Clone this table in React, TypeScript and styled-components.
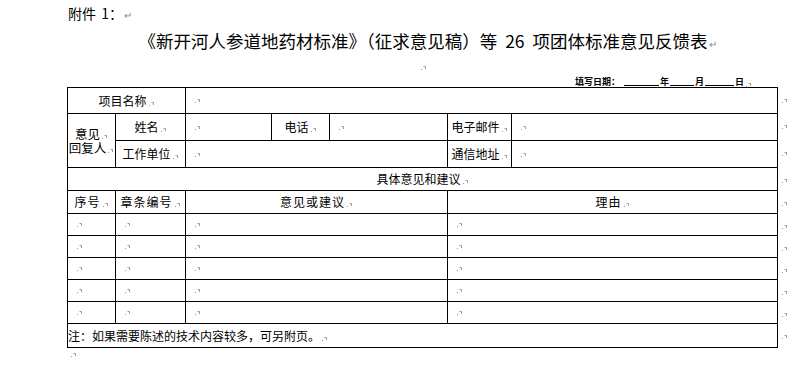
import styled, { createGlobalStyle } from 'styled-components';

const GlobalStyle = createGlobalStyle`
  html, body {
    margin: 0;
    padding: 0;
    background: #fff;
  }
  body {
    font-family: 'Noto Sans CJK SC', 'Liberation Sans', sans-serif;
    color: #000;
  }
`;

const Page = styled.div`
  width: 811px;
  height: 382px;
  padding-left: 67px;
  box-sizing: border-box;
  overflow: hidden;
`;

const Column = styled.div`
  width: 720px;
`;

const Attachment = styled.div`
  height: 26px;
  line-height: 26px;
  font-size: 14px;
  padding-left: 1px;
  word-spacing: 2px;
`;

const Title = styled.div`
  width: 711px;
  height: 30px;
  line-height: 30px;
  font-size: 17.5px;
  text-align: center;
  padding-left: 10px;
  box-sizing: border-box;
  white-space: nowrap;
  word-spacing: 4px;
`;

const Return = styled.span`
  color: #8a8a8a;
  font-size: 10px;
  margin-left: 1px;
`;

const EmptyLine = styled.div`
  width: 711px;
  height: 18px;
  line-height: 14px;
  text-align: center;
`;

const DateLine = styled.div`
  width: 711px;
  height: 13px;
  display: flex;
  justify-content: flex-end;
  align-items: flex-end;
  padding-right: 26px;
  box-sizing: border-box;
  font-size: 9px;
  font-weight: 700;
  line-height: 11px;
  white-space: nowrap;
`;

const Blank = styled.span<{ $w: number; $lead?: number }>`
  display: inline-block;
  width: ${p => p.$w}px;
  height: 9px;
  border-bottom: 1px solid #000;
  margin: 0 1px 1px ${p => p.$lead ?? 1}px;
`;

const TableRow = styled.div`
  display: flex;
  align-items: flex-start;
`;

const Grid = styled.div`
  display: grid;
  grid-template-columns: 48px 70px 86px 58px 118px 64px 266px;
  grid-template-rows: 26px 27px 27px 23px 23px repeat(5, 22px) 24px;
  border-top: 1px solid #000;
  border-left: 1px solid #000;
`;

const Cell = styled.div<{ $span?: number; $rows?: number; $center?: boolean; $spaced?: boolean; $pad?: number }>`
  grid-column: span ${p => p.$span ?? 1};
  grid-row: span ${p => p.$rows ?? 1};
  border-right: 1px solid #000;
  border-bottom: 1px solid #000;
  display: flex;
  align-items: center;
  justify-content: ${p => (p.$center ? 'center' : 'flex-start')};
  padding: 0 ${p => p.$pad ?? 7}px;
  font-size: 12px;
  letter-spacing: ${p => (p.$spaced ? '1px' : '0')};
  white-space: nowrap;
  min-width: 0;
`;

const Label = styled.span`
  line-height: 14px;
`;

const Stack = styled.div`
  line-height: 14px;
  font-size: 12.5px;
  text-align: center;
`;

const RowEnds = styled.div`
  display: grid;
  grid-template-rows: 26px 27px 27px 23px 23px repeat(5, 22px) 24px;
  padding-top: 1px;
  margin-left: 2px;
`;

const RowEnd = styled.div`
  padding-top: 6px;
  line-height: 5px;
`;

const Trailer = styled.div`
  padding: 0 0 0 2px;
  line-height: 5px;
`;

const MarkSvg = styled.svg`
  margin-left: 2px;
  vertical-align: baseline;
`;

const Mark = () => (
  <MarkSvg width="6" height="5" viewBox="0 0 6 5">
    <rect x="0" y="4" width="1" height="1" fill="#9a9a9a" />
    <path d="M2.5 1.5H4.5V4" stroke="#9a9a9a" fill="none" strokeWidth="1" />
  </MarkSvg>
);

const DATA_ROWS = [1, 2, 3, 4, 5];
const ROW_COUNT = 11;

export default function App() {
  return (
    <Page>
      <GlobalStyle />
      <Column>
        <Attachment>
          附件 1：<Return>↵</Return>
        </Attachment>
        <Title>
          《新开河人参道地药材标准》（征求意见稿）等 26 项团体标准意见反馈表<Return>↵</Return>
        </Title>
        <EmptyLine>
          <Mark />
        </EmptyLine>
        <DateLine>
          填写日期：<Blank $w={35} $lead={4} />年<Blank $w={24} />月<Blank $w={29} />日
          <Mark />
        </DateLine>
        <TableRow>
          <Grid>
            <Cell $span={2} $center>
              <Label>项目名称<Mark /></Label>
            </Cell>
            <Cell $span={5}>
              <Mark />
            </Cell>

            <Cell $rows={2} $center $pad={0}>
              <Stack>
                意见<Mark />
                <br />
                回复人<Mark />
              </Stack>
            </Cell>
            <Cell $center>
              <Label>姓名<Mark /></Label>
            </Cell>
            <Cell>
              <Mark />
            </Cell>
            <Cell $center>
              <Label>电话<Mark /></Label>
            </Cell>
            <Cell>
              <Mark />
            </Cell>
            <Cell $center $pad={0}>
              <Label>电子邮件<Mark /></Label>
            </Cell>
            <Cell>
              <Mark />
            </Cell>

            <Cell $center $pad={0}>
              <Label>工作单位<Mark /></Label>
            </Cell>
            <Cell $span={3}>
              <Mark />
            </Cell>
            <Cell $center $pad={0}>
              <Label>通信地址<Mark /></Label>
            </Cell>
            <Cell>
              <Mark />
            </Cell>

            <Cell $span={7} $center>
              <Label>具体意见和建议<Mark /></Label>
            </Cell>

            <Cell $center $spaced $pad={0}>
              <Label>序号<Mark /></Label>
            </Cell>
            <Cell $center $spaced $pad={0}>
              <Label>章条编号<Mark /></Label>
            </Cell>
            <Cell $span={3} $center $spaced>
              <Label>意见或建议<Mark /></Label>
            </Cell>
            <Cell $span={2} $center $spaced>
              <Label>理由<Mark /></Label>
            </Cell>

            {DATA_ROWS.map(r => [
              <Cell key={`a${r}`}><Mark /></Cell>,
              <Cell key={`b${r}`}><Mark /></Cell>,
              <Cell key={`c${r}`} $span={3}><Mark /></Cell>,
              <Cell key={`d${r}`} $span={2}><Mark /></Cell>,
            ])}

            <Cell $span={7} $pad={0}>
              <Label>注：如果需要陈述的技术内容较多，可另附页。<Mark /></Label>
            </Cell>
          </Grid>
          <RowEnds>
            {Array.from({ length: ROW_COUNT }).map((_, i) => (
              <RowEnd key={i}>
                <Mark />
              </RowEnd>
            ))}
          </RowEnds>
        </TableRow>
        <Trailer>
          <Mark />
        </Trailer>
      </Column>
    </Page>
  );
}
